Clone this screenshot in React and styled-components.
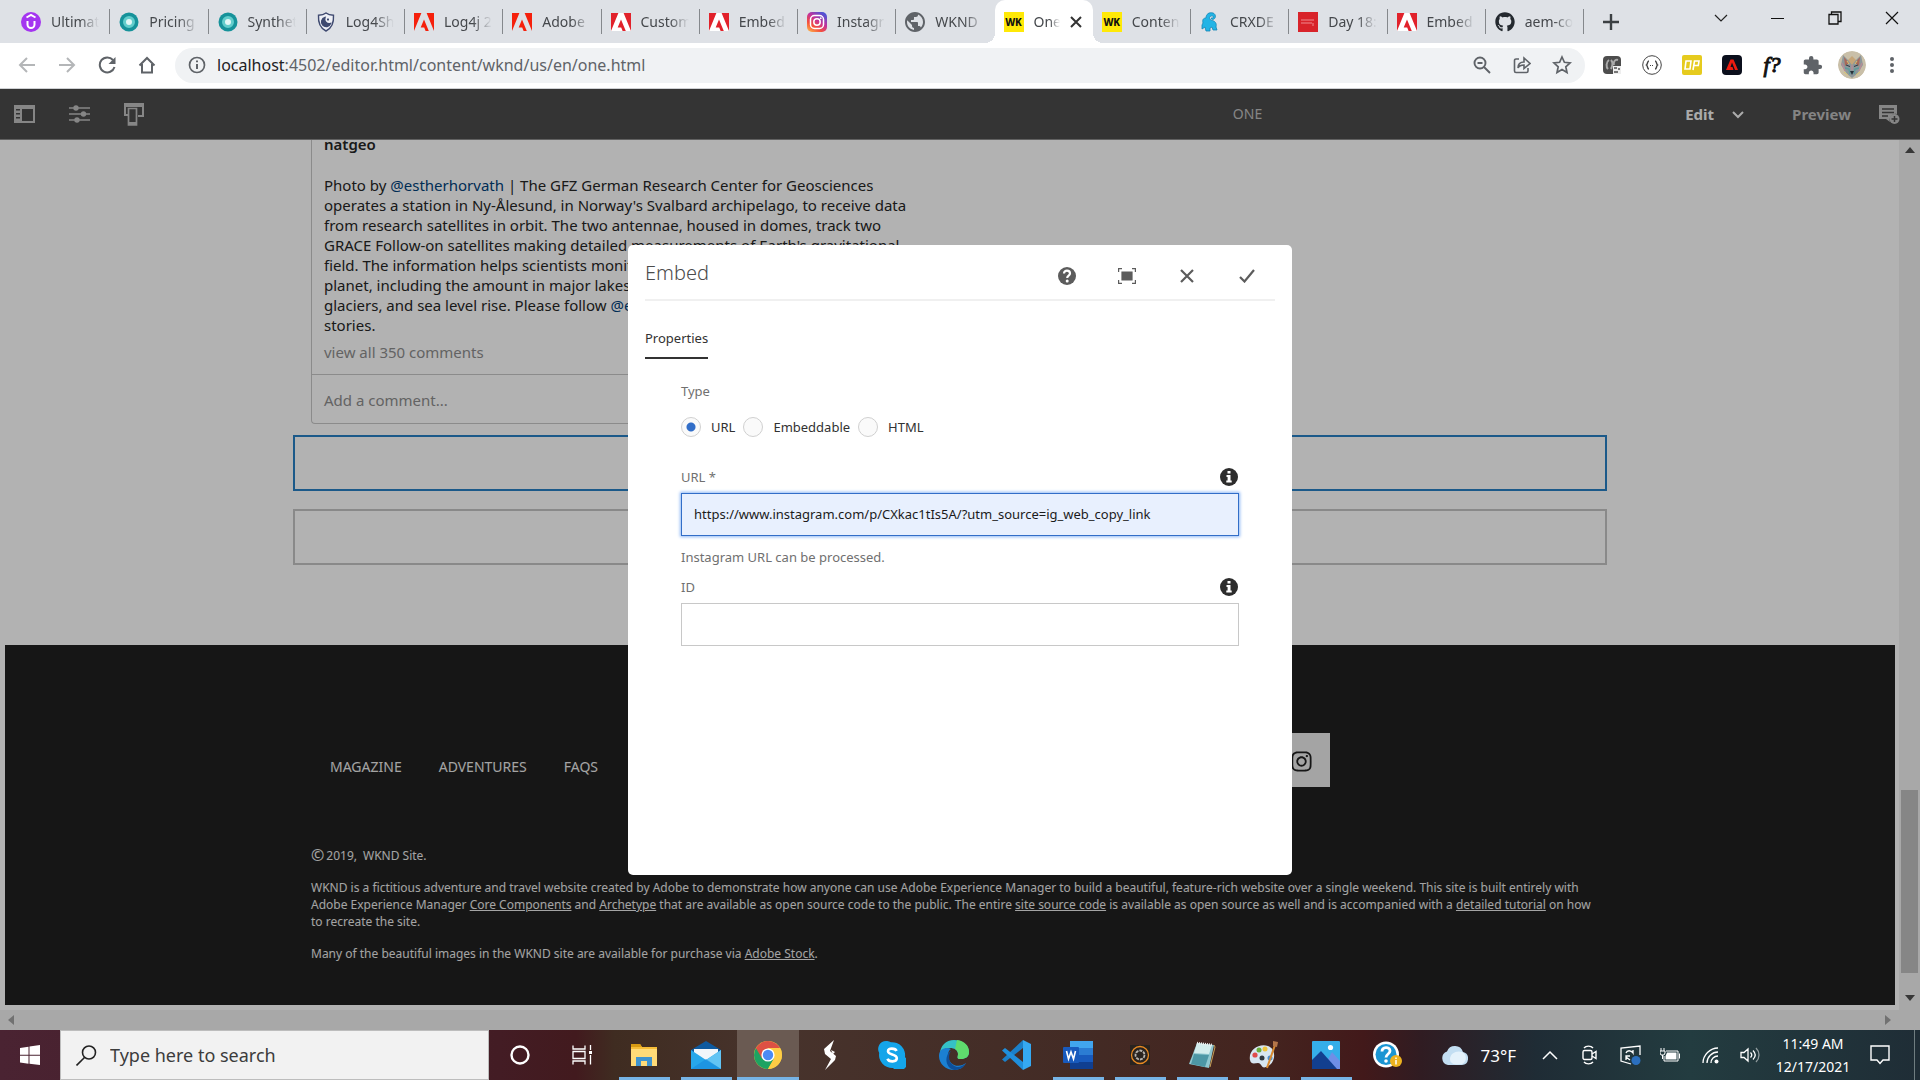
import React, { useState } from 'react';
import styled, { createGlobalStyle, css } from 'styled-components';
import { FaGithub, FaInstagram } from 'react-icons/fa';
import { MdExtension, MdPublic } from 'react-icons/md';

const GlobalStyle = createGlobalStyle`
  * { box-sizing: border-box; }
  html, body { margin: 0; padding: 0; overflow: hidden; }
  body { font-family: "Noto Sans", "Open Sans", sans-serif; }
  button, input { font-family: inherit; }
  button { background: none; border: none; padding: 0; color: inherit; cursor: pointer; }
  svg { display: block; flex: none; }
`;

const Desktop = styled.div`
  display: flex;
  flex-direction: column;
  height: 100vh;
`;

/* ---------- browser tabs ---------- */

const TabStrip = styled.header`
  display: flex;
  align-items: stretch;
  height: 43px;
  padding-left: 12px;
  background: #dee1e6;
`;

const Tabs = styled.nav`
  display: flex;
  flex: 1;
  min-width: 0;
`;

const Tab = styled.button`
  display: flex;
  align-items: center;
  flex: 1 1 0;
  min-width: 0;
  gap: 10px;
  padding: 0 11px 0 9px;
  color: #45484c;
  background: linear-gradient(#85888c, #85888c) right center / 1px 25px no-repeat;

  ${(p) => p.$noLine && css`background: none;`}

  ${(p) => p.$active && css`
    background: #ffffff;
    border-radius: 10px 10px 0 0;
    position: relative;

    &::before, &::after {
      content: '';
      position: absolute;
      bottom: 0;
      width: 10px;
      height: 10px;
    }
    &::before { left: -10px; background: radial-gradient(circle at 0 0, #dee1e6 10px, #ffffff 10px); }
    &::after { right: -10px; background: radial-gradient(circle at 100% 0, #dee1e6 10px, #ffffff 10px); }
  `}
`;

const TabTitle = styled.span`
  flex: 1;
  min-width: 0;
  overflow: hidden;
  white-space: nowrap;
  text-align: left;
  font-size: 14px;
  line-height: 20px;
  mask-image: linear-gradient(to right, #000 60%, transparent 100%);
`;

const StripActions = styled.div`
  display: flex;
  align-items: center;
  justify-content: space-between;
  flex: none;
  width: 336px;
`;

const NewTab = styled.button`
  width: 54px;
  height: 42px;
  display: flex;
  align-items: center;
  justify-content: center;
`;

const WindowButtons = styled.div`
  display: flex;
  height: 36px;
  align-self: flex-start;
`;

const WindowButton = styled.button`
  width: 57px;
  display: flex;
  align-items: center;
  justify-content: center;
`;

/* ---------- browser toolbar ---------- */

const Toolbar = styled.div`
  display: flex;
  align-items: center;
  height: 46px;
  padding: 0 8px 1px 7px;
  background: #ffffff;
  border-bottom: 1px solid #cfd1d4;
`;

const ToolButton = styled.button`
  width: 40px;
  height: 36px;
  display: flex;
  align-items: center;
  justify-content: center;
  color: ${(p) => (p.$faded ? '#b4b6b8' : '#5f6368')};
`;

const Omnibox = styled.div`
  display: flex;
  align-items: center;
  flex: 1;
  height: 35px;
  margin: 0 7px 0 8px;
  padding: 0 3px 0 12px;
  gap: 10px;
  background: #f0f2f4;
  border-radius: 18px;
`;

const Address = styled.div`
  flex: 1;
  font-size: 16px;
  line-height: 24px;
  color: #5f6368;
  b { font-weight: 400; color: #202124; }
`;

const OmniActions = styled.div`
  display: flex;
`;

const FontMark = styled.span`
  font-family: "Liberation Serif", serif;
  font-size: 22px;
  font-style: italic;
  color: #111111;
  -webkit-text-stroke: 1px #111111;
`;

const Avatar = styled.span`
  display: block;
  width: 28px;
  height: 28px;
  border-radius: 50%;
  overflow: hidden;
`;

/* ---------- editor ---------- */

const Editor = styled.main`
  position: relative;
  display: flex;
  flex-direction: column;
  flex: 1;
  min-height: 0;
  background: #ffffff;
`;

const EditorBar = styled.div`
  display: flex;
  align-items: center;
  flex: none;
  height: 51px;
  padding: 0 20px 0 14px;
  background: #4b4b4b;
  border-bottom: 1px solid #8c8c8c;
  color: #c0c0c0;
`;

const BarSide = styled.div`
  display: flex;
  align-items: center;
  gap: 34px;
`;

const BarTitle = styled.h1`
  margin: 0 0 0 auto;
  padding-right: 423px;
  font-size: 14px;
  font-weight: 400;
  line-height: 20px;
`;

const ModeButton = styled.button`
  display: flex;
  align-items: center;
  gap: 18px;
  font-size: 15px;
  font-weight: 700;
  line-height: 20px;
  color: ${(p) => (p.$current ? '#f5f5f5' : '#bdbdbd')};
`;

const BarButton = styled.button`
  display: flex;
`;

const ModeGroup = styled(BarSide)`
  gap: 48px;
`;

const PreviewGroup = styled(BarSide)`
  gap: 28px;
`;

const Canvas = styled.div`
  display: flex;
  flex: 1;
  min-height: 0;
`;

const Column = styled.div`
  display: flex;
  flex-direction: column;
  flex: 1;
  min-width: 0;
`;

/* Scrolled to its end, so the content is held at the bottom edge */
const Viewport = styled.div`
  display: flex;
  flex-direction: column;
  justify-content: flex-end;
  flex: 1;
  min-height: 0;
  overflow: hidden;
  padding: 0 4px 5px 5px;
`;

const Content = styled.div`
  width: 100%;
  max-width: 1314px;
  margin: 0 auto;
  padding-bottom: 80px;
  flex: none;
`;

const InstaCard = styled.article`
  width: 606px;
  margin: 0 0 11px 18px;
  border: 1px solid #c8c8c8;
  border-right-color: transparent;
  border-radius: 4px;
  font-size: 15px;
  line-height: 20px;
  white-space: nowrap;
  color: #262626;
`;

const InstaBody = styled.div`
  padding: 12px;
  p { margin: 0 0 7px; }
`;

const InstaUser = styled.a`
  display: block;
  margin-bottom: 21px;
  font-weight: 600;
  color: #262626;
  text-decoration: none;
`;

const Mention = styled.a`
  color: #00417a;
  text-decoration: none;
`;

const Comments = styled.a`
  display: block;
  color: #8e8e8e;
  text-decoration: none;
`;

const AddComment = styled.a`
  display: block;
  padding: 15px 12px 13px;
  border-top: 1px solid #c8c8c8;
  color: #8e8e8e;
  text-decoration: none;
`;

const DropZone = styled.div`
  height: 56px;
  margin-bottom: 18px;
  border: 2px solid ${(p) => (p.$selected ? '#2780c4' : '#c4c4c4')};

  &:last-child { margin-bottom: 0; }
`;

const Footer = styled.footer`
  flex: none;
  height: 360px;
  background: #202020;
  color: #ebebeb;
`;

const FooterInner = styled.div`
  max-width: 1278px;
  margin: 0 auto;
  padding-top: 88px;
  font-size: 12px;
  line-height: 17px;

  p { margin: 0 -12px 15px 0; }
  a { color: inherit; }
`;

const FooterTop = styled.div`
  display: flex;
  align-items: center;
  justify-content: space-between;
  height: 54px;
  margin-bottom: 60px;
  padding: 0 259px 0 19px;
`;

const FooterNav = styled.nav`
  display: flex;
  gap: 37px;
  padding-top: 14px;

  a {
    font-size: 14px;
    line-height: 20px;
    text-decoration: none;
  }
`;

const Social = styled.a`
  display: flex;
  align-items: center;
  justify-content: center;
  width: 57px;
  height: 54px;
  padding-top: 2px;
  background: #ebebeb;

  svg { color: #202020; }
`;

const Copyright = styled.p`
  display: flex;
  align-items: center;
  gap: 6px;
`;

const CopySign = styled.span`
  margin-right: -4px;
  font-size: 16px;
`;

const ScrollV = styled.div`
  display: flex;
  flex-direction: column;
  align-items: center;
  justify-content: space-between;
  width: 21px;
  padding: 7px 0;
  background: #f1f1f1;
  color: #505050;
`;

const ThumbV = styled.div`
  width: 17px;
  height: 183px;
  margin: auto 0 20px;
  background: #c1c1c1;
`;

const DownArrow = styled.span`
  padding: 2px 0 22px;
`;

const ScrollH = styled.div`
  display: flex;
  align-items: center;
  justify-content: space-between;
  flex: none;
  height: 20px;
  padding: 0 8px;
  background: #f1f1f1;
  color: #a3a3a3;
`;

/* ---------- dialog ---------- */

const Backdrop = styled.div`
  position: absolute;
  inset: 0;
  display: flex;
  align-items: center;
  justify-content: center;
  background: rgba(0, 0, 0, 0.3);
`;

const Dialog = styled.form`
  width: 664px;
  min-height: 630px;
  padding: 0 17px;
  background: #ffffff;
  border-radius: 5px;
  font-size: 13px;
  line-height: 20px;
  color: #323232;
`;

const DialogHeader = styled.div`
  display: flex;
  align-items: center;
  justify-content: space-between;
  height: 56px;
  padding-top: 2px;
  border-bottom: 2px solid #f0f0f0;
`;

const DialogTitle = styled.h2`
  margin: 0;
  font-size: 20px;
  font-weight: 300;
  line-height: 28px;
  color: #4b4b4b;
`;

const DialogActions = styled.div`
  display: flex;
  gap: 40px;
  padding: 6px 18px 0 0;
  color: #5c5c5c;
`;

const DialogButton = styled.button`
  display: flex;
  align-items: center;
  justify-content: center;
  width: 20px;
  height: 20px;
`;

const DialogTab = styled.button`
  display: block;
  margin: 27px 0 22px;
  padding: 0 0 9px;
  border-bottom: 2px solid #323232;
  font-size: 13px;
  line-height: 20px;
  color: #323232;
`;

const Fields = styled.div`
  padding: 0 36px;
`;

const TypeGroup = styled.fieldset`
  margin: 0 0 30px;
  padding: 0;
  border: none;

  legend {
    margin-bottom: 16px;
    padding: 0;
    color: #707070;
  }
`;

const Choices = styled.div`
  display: flex;
  gap: 8px;
`;

const Choice = styled.label`
  display: flex;
  align-items: center;
  gap: 10px;
`;

const Radio = styled.input`
  appearance: none;
  width: 20px;
  height: 20px;
  margin: 0;
  border: 1px solid #d0d0d0;
  border-radius: 50%;
  background: #fafafa;

  &:checked {
    background: radial-gradient(circle, #326ec8 4px, #fafafa 5px);
  }
`;

const LabelRow = styled.div`
  display: flex;
  align-items: center;
  justify-content: space-between;
  margin-bottom: 6px;
  padding-right: 1px;
  color: #707070;
`;

const TextField = styled.input`
  display: block;
  width: 100%;
  height: 43px;
  padding: 0 12px;
  border: 1px solid #c8c8c8;
  background: #ffffff;
  font-size: 13px;
  color: #1b1b1b;
  outline: none;

  ${(p) => p.$filled && css`
    border: 1px solid #326ec8;
    background: #e8f0fe;
    box-shadow: 0 0 3px 1px #8fb8f5;
  `}
`;

const Hint = styled.p`
  margin: 11px 0 10px;
  color: #707070;
`;

/* ---------- taskbar ---------- */

const Taskbar = styled.footer`
  display: flex;
  flex: none;
  height: 50px;
  color: #ffffff;
  background: linear-gradient(to right,
    #4a2332 0%, #431c24 26%, #421a1e 30%, #3f2c21 32%, #47332c 40%,
    #432b25 56%, #44241f 66%, #42191a 71%, #301c22 74%, #1f2c35 80%,
    #233c40 88%, #1f2d36 100%);
`;

const StartButton = styled.button`
  display: flex;
  align-items: center;
  justify-content: center;
  width: 60px;
`;

const TaskSearch = styled.label`
  display: flex;
  align-items: center;
  gap: 13px;
  width: 429px;
  padding-left: 15px;
  background: #f2f2f2;
  border: 1px solid #bdbdbd;

  input {
    flex: 1;
    min-width: 0;
    padding: 0;
    border: none;
    background: none;
    outline: none;
    font-size: 18px;
    color: #2b2b2b;
  }
  input::placeholder { color: #3c3c3c; opacity: 1; }
`;

const AppButton = styled.button`
  display: flex;
  align-items: center;
  justify-content: center;
  width: 62px;
  background: ${(p) => (p.$focused ? '#6a5a52' : 'none')};

  ${(p) => p.$running && css`
    &::after {
      content: '';
      position: absolute;
      bottom: 0;
      width: ${p.$focused ? 62 : 51}px;
      height: 3px;
      background: #76b4e6;
    }
  `}
`;

const Tray = styled.div`
  display: flex;
  align-items: center;
  margin-left: auto;
`;

const Weather = styled.button`
  display: flex;
  align-items: center;
  gap: 12px;
  margin-right: 14px;
  font-size: 17px;
`;

const TrayButton = styled.button`
  display: flex;
  align-items: center;
  justify-content: center;
  width: 40px;
  height: 50px;
`;

const Clock = styled.button`
  width: 86px;
  font-size: 14px;
  line-height: 23px;
  white-space: nowrap;
`;

const Notices = styled(TrayButton)`
  width: 48px;
  margin-right: 10px;
`;

const ShowDesktop = styled.button`
  width: 6px;
  height: 50px;
  border-left: 1px solid #6f7d80;
`;

/* ---------- drawings ---------- */

const Svg = ({ w = 20, h = w, box = `0 0 ${w} ${h}`, children, ...rest }) => (
  <svg width={w} height={h} viewBox={box} fill="none" aria-hidden="true" {...rest}>{children}</svg>
);

const WkBadge = styled.span`
  flex: none;
  width: 20px;
  height: 20px;
  background: #ffe907;
  color: #111111;
  font-size: 10px;
  font-weight: 800;
  line-height: 20px;
  text-align: center;
`;

const UdemyIcon = () => (
  <Svg><circle cx="10" cy="10" r="10" fill="#a435f0" /><path d="M5.500 5.500 10 3l4.500 2.500M6.500 9v3.500a3.500 3.500 0 0 0 7 0V9" stroke="#fff" strokeWidth="2" /></Svg>
);
const RingIcon = () => (
  <Svg><circle cx="10" cy="10" r="9.500" fill="#16929a" /><circle cx="10" cy="10" r="4.500" fill="#e3f8f7" stroke="#63cdcc" strokeWidth="3" /></Svg>
);
const ShieldIcon = () => (
  <Svg stroke="#3f4a70" strokeWidth="1.400"><path d="M10 1c2.500 2 5 2.200 7.500 2.200C18 11 16 16 10 19 4 16 2 11 2.500 3.200 5 3.200 7.500 3 10 1Z" fill="#eef0f6" /><path d="M9 5.500a4.600 4.600 0 1 0 5.500 6A4.500 4.500 0 0 1 9 5.500Z" fill="#3f4a70" /><path d="M12 6.500v2M11 7.500h2" /></Svg>
);
const AdobeIcon = ({ solid }) => (
  <Svg>
    {solid && <path d="M0 1h20v18H0z" fill="#ffffff" />}
    <path d="M0 1h7.400L0 19ZM12.600 1H20v18ZM10 7.600 14.800 19h-3.200l-1.400-3.600H6.700Z" fill={solid ? '#e1222b' : '#f5200c'} />
  </Svg>
);
const InstaColorIcon = () => (
  <Svg>
    <defs><linearGradient id="ig" x1="0" y1="1" x2="0.700" y2="0"><stop offset="0" stopColor="#fdc34f" /><stop offset="0.350" stopColor="#f5503c" /><stop offset="0.650" stopColor="#c4319a" /><stop offset="1" stopColor="#5153d4" /></linearGradient></defs>
    <rect width="20" height="20" rx="5" fill="url(#ig)" />
    <rect x="3.500" y="3.500" width="13" height="13" rx="4" stroke="#fff" strokeWidth="1.500" /><circle cx="10" cy="10" r="3.200" stroke="#fff" strokeWidth="1.500" /><circle cx="13.800" cy="6.200" r="0.900" fill="#fff" />
  </Svg>
);
const CrxIcon = () => (
  <Svg><path d="M3 11c-1-4 1-5 3-5 0-4 3-6 7-5 3 1 3 5 1 6-1 1-3 0-3-1 3 1 3-3 0-2-2 1-2 3 0 4 4 1 6 3 5 7l1 3h-4l-1-3-2 1v3H6l-1-4-3 2v-4Z" fill="#22b4e6" stroke="#1586b5" strokeWidth="0.800" /></Svg>
);
const RedIcon = () => (
  <Svg><path d="M0 0h20v20H0z" fill="#d8232a" /><path d="M3 8h13M3 11h11M15 11v3" stroke="#f08a8e" strokeWidth="1" /></Svg>
);
const InfoDot = ({ label }) => (
  <Svg w={18} role="img" aria-label={label}><circle cx="9" cy="9" r="9" fill="#2c2c2c" /><path d="M7.500 3h3v2.600h-3zM6.500 7h4v5.500h1.200v2H6.300v-2h1.300V9H6.500z" fill="#fff" /></Svg>
);
const WolfAvatar = () => (
  <Svg w={28}>
    <circle cx="14" cy="14" r="14" fill="#c9bfa8" />
    <path d="M5 4l5 5h8l5-5 2 10-6 9-5 4-5-4L3 14Z" fill="#8d979a" />
    <path d="m6 6 5 6-4 3ZM22 6l-5 6 4 3Z" fill="#a8695a" /><path d="m10 9 4 5 4-5-4-4Z" fill="#c5a578" />
    <path d="m7 17 4 1 1 5M21 17l-4 1-1 5" stroke="#5d9c9c" strokeWidth="1.500" /><path d="M12 20h4l-2 4Z" fill="#28323a" /><path d="m8 14 4 1.500M20 14l-4 1.500" stroke="#2e3a42" />
    <path d="M4 12l3 8M24 12l-3 8M14 14v5" stroke="#b58d97" strokeWidth="1.500" /><path d="m9 10 2 3M19 10l-2 3M6 21l4 3M22 21l-4 3" stroke="#d9c56d" />
  </Svg>
);

const appIcons = {
  cortana: <Svg><circle cx="10" cy="10" r="8.500" stroke="#fff" strokeWidth="2.400" /></Svg>,
  taskview: <Svg stroke="#fff" strokeWidth="1.300"><path d="M1 .5V4h12V.5M1 19.500V16h12v3.500M1 6.500h12v7H1zM18.500 0v5M18.500 10v9.500" /><path d="M17 6h3v3h-3z" fill="#fff" stroke="none" /></Svg>,
  explorer: <Svg w={28} h={24}><path d="M1 1h9l2 3h15v19H1Z" fill="#f6bd38" /><path d="M1 6h26v17H1Z" fill="#ffdb78" /><path d="M6 23v-9h16v9h-5v-5h-6v5Z" fill="#3f94cf" /><path d="M1 1h9l2 3H1z" fill="#d79a13" /></Svg>,
  mail: <Svg w={30} h={28}><path d="m0 9 15-9 15 9v4H0Z" fill="#0e5a9f" /><path d="M3 8h24v14H3z" fill="#f2f6fa" /><path d="m0 9 15 10L30 9v19H0Z" fill="#27a7ea" /><path d="m15 19 15-10v19Z" fill="#62c4f4" /><path d="m15 18 15 10H0Z" fill="#1789dc" opacity=".6" /></Svg>,
  chrome: <Svg w={28}><circle cx="14" cy="14" r="14" fill="#f8cf3a" /><path d="M14 14 1.900 7A14 14 0 0 0 14 28l6-10.500Z" fill="#1da362" /><path d="M14 7h12.100A14 14 0 0 1 14 28l6-10.500Z" fill="#ffcd45" /><path d="M14 7h12.100A14 14 0 0 0 1.900 7L8 17.500Z" fill="#dd5144" /><circle cx="14" cy="14" r="6.600" fill="#fff" /><circle cx="14" cy="14" r="5.200" fill="#4b8af4" /></Svg>,
  slash: <Svg w={16} h={30}><path d="M12 0 2 9l1 5 6 5-6 11 10-10 1-4-6-5ZM13 12l-4-2 2 4Z" fill="#fff" /></Svg>,
  skype: <Svg w={28}><path d="M8 0a8 8 0 0 1 5 1.300A13 13 0 0 1 27 16a8 8 0 0 1-12 11A13 13 0 0 1 1.200 12 8 8 0 0 1 8 0Z" fill="#14a5ea" /><path d="M18.500 10c-1-3-8.500-3.500-8.500.3 0 4 8.800 2.400 8.800 7 0 4-8 4-9.300.4" stroke="#fff" strokeWidth="2.600" /></Svg>,
  edge: <Svg w={30}><path d="M1 14C1 6 7 0 15 0c9 0 15 6 15 12 0 5-4 7-8 7-5 0-3-2-3-5 0-4-4-6-8-6-5 0-9 3-10 6Z" fill="#35c1c6" /><path d="M18 0c8 1 12 6 12 12 0 5-4 7-8 7-5 0-3-2-3-5 0-2-1-4-3-5Z" fill="#5fdc6d" /><path d="M0 16C0 8 8 7 12 9c-4 2-5 12 3 16 5 2 9 0 12-2-3 5-7 7-12 7C7 30 0 24 0 16Z" fill="#1b80d2" /><path d="M12 11c-4 5-2 14 6 16 4 0 7-2 9-4-3 5-7 7-12 7C5 27 6 14 12 11Z" fill="#0d4f9b" /></Svg>,
  vscode: <Svg w={30}><path d="M22 0v8L4 22l-3-2.500Z" fill="#1b80c9" /><path d="m4 8 18 14v8L1 10.500Z" fill="#1f8fdc" /><path d="m22 0 8 4v22l-8 4Z" fill="#35a9f2" /></Svg>,
  word: <Svg w={30} h={28}><rect x="7" width="23" height="28" rx="1" fill="#2b7cd3" /><path d="M7 0h23v7H7z" fill="#41a5ee" /><path d="M7 14h23v7H7z" fill="#185abd" /><path d="M7 21h23v7H7z" fill="#103f91" /><rect y="6" width="16" height="16" rx="1" fill="#185abd" /><path d="m3.500 10 2 8L8 11l2.500 7 2-8" stroke="#fff" strokeWidth="1.600" /></Svg>,
  server: <Svg><path d="M0 0h20v20H0z" fill="#29231f" /><circle cx="10" cy="10" r="8.500" stroke="#e98a22" strokeWidth="1.300" /><circle cx="10" cy="10" r="4.500" stroke="#b8b4ae" strokeWidth="1.800" strokeDasharray="3 1" /></Svg>,
  notepad: <Svg w={28}><path d="m9 2 17 2-5 23L1 23Z" fill="#8fc7cf" /><path d="m9 2 15 2-3 9L6 12Z" fill="#d3ecec" /><path d="m6 13 15 1-4 12-14-3Z" fill="#4d97a5" /><path d="m26 4 1 2-5 20" stroke="#c9a35a" /><path d="M9 2 24 4" stroke="#eee" strokeWidth="2.500" strokeDasharray="1 1" /></Svg>,
  paint: <Svg w={30}><path d="M1 20C-1 10 10 3 19 6c9 3 8 18-2 21-5 2-4-4-8-4-3 0-7 2-8-3Z" fill="#d7e6f1" /><circle cx="6" cy="15" r="2.600" fill="#df4b4b" /><circle cx="10" cy="10" r="2.500" fill="#6aac3c" /><circle cx="16" cy="9" r="2.500" fill="#efc53e" /><circle cx="13" cy="18" r="2.500" fill="#2f3840" /><circle cx="21" cy="18" r="2.500" fill="#4a8fd0" /><path d="m26 5-8 23" stroke="#d98a30" strokeWidth="2" /><path d="m24 1 5 1-1 5-4-1Z" fill="#b5764a" /></Svg>,
  photos: <Svg w={28}><rect width="28" height="28" rx="1" fill="#35aee9" /><path d="m11 28 9-17 8 9v8Z" fill="#6f8fe6" /><path d="m0 19 9-9 16 18H0Z" fill="#123f8f" /><circle cx="18.500" cy="6.500" r="2.600" fill="#fff" /></Svg>,
  help: <Svg w={30} h={28}><circle cx="13" cy="13.500" r="13" fill="#fff" /><circle cx="13" cy="13.500" r="10.500" fill="#1a95d3" /><path d="M9 10.500c0-5 8-5 8-.5 0 3-4 3-4 6.500" stroke="#fff" strokeWidth="2.800" /><circle cx="13" cy="20" r="1.800" fill="#fff" /><circle cx="23" cy="20" r="6" fill="#edb21f" /><path d="M23 16.500v1.500M23 19v4.500" stroke="#fff" strokeWidth="1.500" /></Svg>,
};

const tabs = [
  { title: 'Ultimate', icon: <UdemyIcon /> },
  { title: 'Pricing', icon: <RingIcon /> },
  { title: 'Synthet', icon: <RingIcon /> },
  { title: 'Log4Sh', icon: <ShieldIcon /> },
  { title: 'Log4j 2', icon: <AdobeIcon /> },
  { title: 'Adobe', icon: <AdobeIcon /> },
  { title: 'Custom', icon: <AdobeIcon solid /> },
  { title: 'Embed', icon: <AdobeIcon solid /> },
  { title: 'Instagra', icon: <InstaColorIcon /> },
  { title: 'WKND', icon: <MdPublic size={20} color="#5f6368" viewBox="2 2 20 20" />, noLine: true },
  { title: 'One', icon: <WkBadge>WK</WkBadge>, active: true },
  { title: 'Conten', icon: <WkBadge>WK</WkBadge> },
  { title: 'CRXDE', icon: <CrxIcon /> },
  { title: 'Day 18:', icon: <RedIcon /> },
  { title: 'Embed', icon: <AdobeIcon solid /> },
  { title: 'aem-co', icon: <FaGithub size={20} color="#24292f" /> },
];

const apps = [
  { id: 'cortana' }, { id: 'taskview' },
  { id: 'explorer', running: true }, { id: 'mail', running: true },
  { id: 'chrome', running: true, focused: true },
  { id: 'slash' }, { id: 'skype' }, { id: 'edge' }, { id: 'vscode' },
  { id: 'word', running: true }, { id: 'server', running: true },
  { id: 'notepad', running: true }, { id: 'paint', running: true },
  { id: 'photos', running: true }, { id: 'help' },
];

function BrowserTabs() {
  return (
    <TabStrip>
      <Tabs>
        {tabs.map((tab, i) => (
          <Tab key={i} $active={tab.active} $noLine={tab.noLine}>
            {tab.icon}
            <TabTitle>{tab.title}</TabTitle>
            {tab.active && <Svg w={12} stroke="#333" strokeWidth="2"><path d="m1 1 10 10M11 1 1 11" /></Svg>}
          </Tab>
        ))}
      </Tabs>
      <StripActions>
        <NewTab aria-label="New tab"><Svg w={16} stroke="#3c4043" strokeWidth="2.400"><path d="M8 0v16M0 8h16" /></Svg></NewTab>
        <WindowButtons>
          <WindowButton aria-label="Search tabs"><Svg w={14} stroke="#222" strokeWidth="1.200"><path d="m1 4 6 6 6-6" /></Svg></WindowButton>
          <WindowButton aria-label="Minimize"><Svg w={14} stroke="#111"><path d="M0 7.500h13" /></Svg></WindowButton>
          <WindowButton aria-label="Restore"><Svg w={14} stroke="#111" strokeWidth="1.300"><path d="M1 3.500h9v9.500H1zM3.500 3.500V1h9.500v9.500H10" /></Svg></WindowButton>
          <WindowButton aria-label="Close"><Svg w={14} stroke="#111" strokeWidth="1.200"><path d="m1 1 12 12M13 1 1 13" /></Svg></WindowButton>
        </WindowButtons>
      </StripActions>
    </TabStrip>
  );
}

function BrowserToolbar() {
  return (
    <Toolbar>
      <ToolButton $faded aria-label="Back"><Svg w={18} stroke="currentColor" strokeWidth="2"><path d="M17 9H2M9 2 2 9l7 7" /></Svg></ToolButton>
      <ToolButton $faded aria-label="Forward"><Svg w={18} stroke="currentColor" strokeWidth="2"><path d="M1 9h15M9 2l7 7-7 7" /></Svg></ToolButton>
      <ToolButton aria-label="Reload"><Svg w={18} stroke="currentColor" strokeWidth="2"><path d="M15 4A7.500 7.500 0 1 0 16.500 11" /><path d="M17.500 1v7h-7Z" fill="currentColor" stroke="none" /></Svg></ToolButton>
      <ToolButton aria-label="Home"><Svg w={18} stroke="currentColor" strokeWidth="2"><path d="M4 8v8.500h10V8M1.500 9.500 9 2l7.500 7.500" /></Svg></ToolButton>
      <Omnibox>
        <Svg w={20} stroke="#5f6368" strokeWidth="1.700"><circle cx="10" cy="10" r="7.500" /><path d="M10 9v5M10 5.500v1.800" strokeWidth="2" /></Svg>
        <Address><b>localhost</b>:4502/editor.html/content/wknd/us/en/one.html</Address>
        <OmniActions>
          <ToolButton aria-label="Zoom"><Svg w={18} stroke="currentColor" strokeWidth="1.900"><circle cx="7" cy="7" r="5.500" /><path d="m11 11 6 6M4.500 7h5" /></Svg></ToolButton>
          <ToolButton aria-label="Share"><Svg w={18} stroke="currentColor" strokeWidth="1.600"><path d="M6 3H3a1.500 1.500 0 0 0-1.500 1.500V15A1.500 1.500 0 0 0 3 16.500h10.500A1.500 1.500 0 0 0 15 15v-3" /><path d="M5 12c0-4 2-6 6-6V2l6 5.500-6 5V9c-3 0-5 1-6 3Z" /></Svg></ToolButton>
          <ToolButton aria-label="Bookmark"><Svg w={20} stroke="currentColor" strokeWidth="1.700"><path d="m10 2 2.400 5.300 5.700.6-4.300 3.900 1.200 5.700-5-2.900-5 2.900 1.200-5.700-4.300-3.900 5.700-.6Z" /></Svg></ToolButton>
        </OmniActions>
      </Omnibox>
      <ToolButton aria-label="Recorder"><Svg w={20}><rect x="1" y="1" width="18" height="18" rx="4" fill="#4d4d4d" /><path d="M7 5c-3 2-3 7-1 9M9 5c2 2 2 5 0 9M16 5c-3-1-5 2-4 5" stroke="#aaa" strokeWidth="2" /><path d="M11 11h8v8h-8z" fill="#eee" /><path d="M12 12h3v2h-3zM12 16h4v2h-4zM16 13h2v2h-2z" fill="#777" /></Svg></ToolButton>
      <ToolButton aria-label="JSON"><Svg w={20} stroke="#444"><circle cx="10" cy="10" r="9.300" /><path d="M7 6c-2 0-1 3-2.500 4C6 11 5 14 7 14M13 6c2 0 1 3 2.500 4C14 11 15 14 13 14" strokeWidth="1.500" /><path d="M8 10.500h4" strokeDasharray="1 1" /></Svg></ToolButton>
      <ToolButton aria-label="OP"><Svg w={20}><rect width="20" height="20" rx="2" fill="#e6cb1e" /><path d="M4 6h5L8 14H3zM11 15l1.500-9H17l-.7 4.500h-4.500" stroke="#fff" strokeWidth="1.600" /></Svg></ToolButton>
      <ToolButton aria-label="Adobe debugger"><Svg w={20}><rect width="20" height="20" rx="4" fill="#0b0f1c" /><path d="M8.500 4.500h3L16 15h-3L10 7.500 8.500 12h2l1 3H4Z" fill="#ee1c10" /></Svg></ToolButton>
      <ToolButton aria-label="WhatFont"><FontMark>f?</FontMark></ToolButton>
      <ToolButton aria-label="Extensions"><MdExtension size={21} /></ToolButton>
      <ToolButton aria-label="Profile"><Avatar><WolfAvatar /></Avatar></ToolButton>
      <ToolButton aria-label="Menu"><Svg w={4} h={18}><circle cx="2" cy="3" r="2" fill="currentColor" /><circle cx="2" cy="9" r="2" fill="currentColor" /><circle cx="2" cy="15" r="2" fill="currentColor" /></Svg></ToolButton>
    </Toolbar>
  );
}

function PageContent() {
  return (
    <Viewport>
      <Content>
        <InstaCard>
          <InstaBody>
            <InstaUser href="#natgeo">natgeo</InstaUser>
            <p>
              Photo by <Mention href="#esther">@estherhorvath</Mention> | The GFZ German Research Center for Geosciences<br />
              operates a station in Ny-Ålesund, in Norway's Svalbard archipelago, to receive data<br />
              from research satellites in orbit. The two antennae, housed in domes, track two<br />
              GRACE Follow-on satellites making detailed measurements of Earth's gravitational<br />
              field. The information helps scientists monitor changes<br />
              planet, including the amount in major lakes and rivers,<br />
              glaciers, and sea level rise. Please follow <Mention href="#esther">@estherhorvath</Mention><br />
              stories.
            </p>
            <Comments href="#comments">view all 350 comments</Comments>
          </InstaBody>
          <AddComment href="#add">Add a comment...</AddComment>
        </InstaCard>
        <DropZone $selected />
        <DropZone />
      </Content>
      <Footer>
        <FooterInner>
          <FooterTop>
            <FooterNav>
              <a href="#magazine">MAGAZINE</a>
              <a href="#adventures">ADVENTURES</a>
              <a href="#faqs">FAQS</a>
            </FooterNav>
            <Social href="#instagram" aria-label="Instagram"><FaInstagram size={23} /></Social>
          </FooterTop>
          <Copyright><CopySign>©</CopySign><span>2019,</span><span>WKND Site.</span></Copyright>
          <p>
            WKND is a fictitious adventure and travel website created by Adobe to demonstrate how anyone can use Adobe Experience Manager to build a beautiful, feature-rich website over a single weekend. This site is built entirely with Adobe Experience Manager <a href="#core">Core Components</a> and <a href="#archetype">Archetype</a> that are available as open source code to the public. The entire <a href="#source">site source code</a> is available as open source as well and is accompanied with a <a href="#tutorial">detailed tutorial</a> on how to recreate the site.
          </p>
          <p>Many of the beautiful images in the WKND site are available for purchase via <a href="#stock">Adobe Stock</a>.</p>
        </FooterInner>
      </Footer>
    </Viewport>
  );
}

function EmbedDialog() {
  const [type, setType] = useState('URL');
  const [url, setUrl] = useState('https://www.instagram.com/p/CXkac1tIs5A/?utm_source=ig_web_copy_link');
  const [id, setId] = useState('');

  return (
    <Dialog onSubmit={(e) => e.preventDefault()}>
      <DialogHeader>
        <DialogTitle>Embed</DialogTitle>
        <DialogActions>
          <DialogButton type="button" aria-label="Help">
            <Svg w={18}><circle cx="9" cy="9" r="9" fill="#5c5c5c" /><path d="M6 6.500c0-4 6-3.500 6 0 0 2.300-2.800 2-2.800 4.500" stroke="#fff" strokeWidth="2.200" /><circle cx="9.200" cy="14" r="1.500" fill="#fff" /></Svg>
          </DialogButton>
          <DialogButton type="button" aria-label="Fullscreen">
            <Svg w={18} h={16} stroke="currentColor" strokeWidth="1.200"><path d="M4 .6H.6V4M14 .6h3.400V4M4 15.400H.6V12M14 15.400h3.400V12" /><path d="M4 4h10v8H4z" fill="currentColor" /></Svg>
          </DialogButton>
          <DialogButton type="button" aria-label="Cancel"><Svg stroke="currentColor" strokeWidth="2.200"><path d="m4 4 12 12M16 4 4 16" /></Svg></DialogButton>
          <DialogButton type="submit" aria-label="Done"><Svg w={18} h={14} stroke="currentColor" strokeWidth="2.200"><path d="m2 8 4.500 4.500L16 1" /></Svg></DialogButton>
        </DialogActions>
      </DialogHeader>
      <DialogTab type="button">Properties</DialogTab>
      <Fields>
        <TypeGroup>
          <legend>Type</legend>
          <Choices>
            {['URL', 'Embeddable', 'HTML'].map((name) => (
              <Choice key={name}>
                <Radio type="radio" name="type" checked={type === name} onChange={() => setType(name)} />
                {name}
              </Choice>
            ))}
          </Choices>
        </TypeGroup>
        <LabelRow><label htmlFor="embed-url">URL *</label><InfoDot label="About URL" /></LabelRow>
        <TextField id="embed-url" $filled value={url} onChange={(e) => setUrl(e.target.value)} />
        <Hint>Instagram URL can be processed.</Hint>
        <LabelRow><label htmlFor="embed-id">ID</label><InfoDot label="About ID" /></LabelRow>
        <TextField id="embed-id" value={id} onChange={(e) => setId(e.target.value)} />
      </Fields>
    </Dialog>
  );
}

function PageEditor() {
  return (
    <Editor>
      <EditorBar>
        <BarSide>
          <BarButton aria-label="Side panel"><Svg w={21} h={20}><path d="M0 1h21v18H0zM8 5v12h11V5zM2 5v1.500h4V5zM2 9v1.500h4V9zM2 13v1.500h4V13z" fill="currentColor" fillRule="evenodd" /></Svg></BarButton>
          <BarButton aria-label="Page information"><Svg w={21} h={20} stroke="currentColor" strokeWidth="1.600"><path d="M0 4h21M0 10h21M0 16h21" /><circle cx="7" cy="4" r="2.700" fill="currentColor" stroke="none" /><circle cx="14.500" cy="10" r="2.700" fill="currentColor" stroke="none" /><circle cx="8" cy="16" r="2.700" fill="currentColor" stroke="none" /></Svg></BarButton>
          <BarButton aria-label="Emulator"><Svg w={20} h={24}><path d="M0 1h20v14h-6v-2h4V3H2v9h2v2H0z" fill="currentColor" /><path d="M2 2h16v3H2z" fill="currentColor" /><path d="M4.500 6.500h8V23h-8z" fill="#4b4b4b" stroke="currentColor" strokeWidth="1.700" /><path d="M4.500 20h8v3h-8z" fill="currentColor" /></Svg></BarButton>
        </BarSide>
        <BarTitle>ONE</BarTitle>
        <ModeGroup>
          <ModeButton $current>Edit<Svg w={12} stroke="currentColor" strokeWidth="2"><path d="m1 4 5 5 5-5" /></Svg></ModeButton>
          <PreviewGroup>
            <ModeButton>Preview</ModeButton>
            <BarButton aria-label="Annotate"><Svg w={21} h={20}><path d="M0 1h18v9a6 6 0 0 0-7 8l-4-3H0z" fill="currentColor" /><path d="M3 5h12M3 8.500h12M3 12h6" stroke="#4b4b4b" strokeWidth="1.300" /><circle cx="15.500" cy="15" r="5" fill="currentColor" /><path d="M15.500 12v6M12.500 15h6" stroke="#4b4b4b" strokeWidth="1.500" /></Svg></BarButton>
          </PreviewGroup>
        </ModeGroup>
      </EditorBar>
      <Canvas>
        <Column>
          <PageContent />
          <ScrollH>
            <Svg w={6} h={10}><path d="M6 0v10L0 5Z" fill="currentColor" /></Svg>
            <Svg w={6} h={10}><path d="M0 0v10l6-5Z" fill="currentColor" /></Svg>
          </ScrollH>
        </Column>
        <ScrollV>
          <Svg w={10} h={6}><path d="M0 6h10L5 0Z" fill="currentColor" /></Svg>
          <ThumbV />
          <DownArrow><Svg w={10} h={6}><path d="M0 0h10L5 6Z" fill="currentColor" /></Svg></DownArrow>
        </ScrollV>
      </Canvas>
      <Backdrop><EmbedDialog /></Backdrop>
    </Editor>
  );
}

function WindowsTaskbar() {
  return (
    <Taskbar>
      <StartButton aria-label="Start"><Svg w={20}><path d="m0 3 8.500-1.300v8H0zM9.500 1.500 20 0v9.700H9.500zM0 10.700h8.500v8L0 17.400zM9.500 10.700H20V20L9.500 18.700z" fill="#fff" /></Svg></StartButton>
      <TaskSearch>
        <Svg w={21} stroke="#222" strokeWidth="1.600"><circle cx="13" cy="7.500" r="6.500" /><path d="m8.500 12.500-8 8" /></Svg>
        <input type="text" placeholder="Type here to search" aria-label="Search" />
      </TaskSearch>
      {apps.map((app) => (
        <AppButton key={app.id} aria-label={app.id} $running={app.running} $focused={app.focused}>{appIcons[app.id]}</AppButton>
      ))}
      <Tray>
        <Weather>
          <Svg w={27} h={20}><path d="M7 20a7 7 0 0 1-1-13.500A8.500 8.500 0 0 1 22 7a6.600 6.600 0 0 1-1 13Z" fill="#c3def2" /><path d="M9 14c0-6 7-9 12-7a6.600 6.600 0 0 1 0 12c-5 1-12 1-12-5Z" fill="#e5f2fb" /></Svg>
          73°F
        </Weather>
        <TrayButton aria-label="Hidden icons"><Svg w={16} h={10} stroke="#fff" strokeWidth="1.500"><path d="m1 9 7-7 7 7" /></Svg></TrayButton>
        <TrayButton aria-label="Meet now"><Svg w={16} h={20} stroke="#fff" strokeWidth="1.400"><rect x="1" y="5.500" width="9" height="9" rx="1.500" /><path d="m10 9 4-2.500v7L10 11M2 3c2-2.500 7-2.500 9 0M2 17c2 2.500 7 2.500 9 0" /></Svg></TrayButton>
        <TrayButton aria-label="Sync"><Svg w={21} h={20} stroke="#fff" strokeWidth="1.300"><path d="M11 19 1 16V3l19-2v9M6 15v-4h4M6 8c1-3 5-3 7 0V5M6 12l4 3" /><circle cx="16" cy="15.500" r="4.500" fill="#2b6fbe" stroke="none" /></Svg></TrayButton>
        <TrayButton aria-label="Battery"><Svg w={20} h={14}><path d="M6 3h12v10H4V8" stroke="#fff" /><path d="M7 4.500h9.500v7H5.500V8z" fill="#fff" /><path d="M19.500 5.500v5M1 0v3M4 0v3M0 3h5v2L4 7H1L0 5zM2.500 7v4" stroke="#fff" /></Svg></TrayButton>
        <TrayButton aria-label="Network"><Svg w={17} h={17} stroke="#fff" strokeWidth="1.300"><path d="M1 16C1 8 8 1 16 1M5 16C5 10 10 5 16 5M9 16c0-4 3-7 7-7" /><circle cx="14.500" cy="14.500" r="2" fill="#fff" stroke="none" /></Svg></TrayButton>
        <TrayButton aria-label="Volume"><Svg w={20} h={18} stroke="#fff" strokeWidth="1.300"><path d="M1 6.500h3L8 3v12l-4-3.500H1zM10.500 6.500c1.500 1.500 1.500 3.500 0 5M13 4.500c3 3 3 6 0 9" /><path d="M16 2c4 4 4 10 0 14" opacity=".5" /></Svg></TrayButton>
        <Clock>11:49 AM<br />12/17/2021</Clock>
        <Notices aria-label="Notifications"><Svg w={20} h={20} stroke="#fff" strokeWidth="1.400"><path d="M1 1h18v14h-6l-3 3.500L7 15H1z" /></Svg></Notices>
        <ShowDesktop aria-label="Show desktop" />
      </Tray>
    </Taskbar>
  );
}

export default function App() {
  return (
    <>
      <GlobalStyle />
      <Desktop>
        <BrowserTabs />
        <BrowserToolbar />
        <PageEditor />
        <WindowsTaskbar />
      </Desktop>
    </>
  );
}
